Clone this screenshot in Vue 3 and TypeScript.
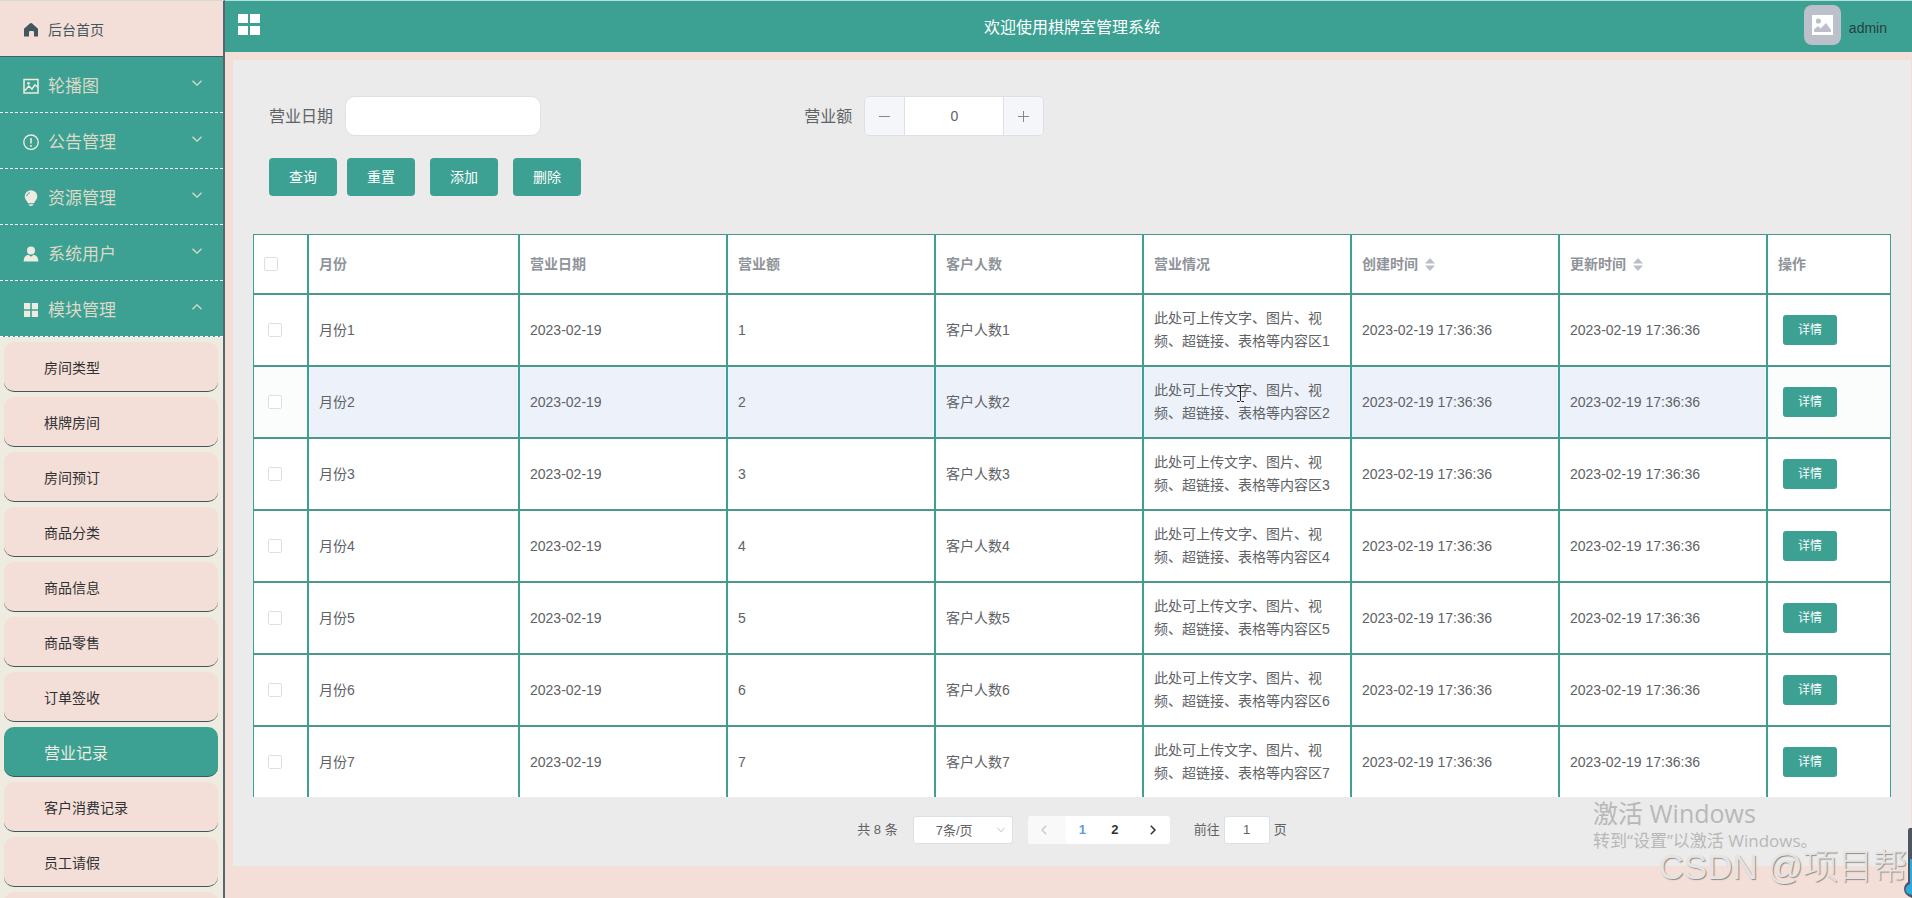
<script setup lang="ts">
import { ref } from 'vue'

interface MenuGroup {
  label: string
  icon: 'picture' | 'warning' | 'bulb' | 'user' | 'grid'
  open: boolean
}

interface BusinessRecord {
  id: number
  month: string
  date: string
  amount: number
  guests: string
  detail: string
  created: string
  updated: string
}

const groups: MenuGroup[] = [
  { label: '轮播图', icon: 'picture', open: false },
  { label: '公告管理', icon: 'warning', open: false },
  { label: '资源管理', icon: 'bulb', open: false },
  { label: '系统用户', icon: 'user', open: false },
  { label: '模块管理', icon: 'grid', open: true },
]

const modules: string[] = [
  '房间类型', '棋牌房间', '房间预订', '商品分类', '商品信息',
  '商品零售', '订单签收', '营业记录', '客户消费记录', '员工请假',
]
const activeModule = ref('营业记录')

const records: BusinessRecord[] = Array.from({ length: 7 }, (_, i) => ({
  id: i + 1,
  month: `月份${i + 1}`,
  date: '2023-02-19',
  amount: i + 1,
  guests: `客户人数${i + 1}`,
  detail: `此处可上传文字、图片、视频、超链接、表格等内容区${i + 1}`,
  created: '2023-02-19 17:36:36',
  updated: '2023-02-19 17:36:36',
}))
const highlighted = ref(2)

const dateQuery = ref('')
const amountQuery = ref(0)
const jumpPage = ref('1')
const currentPage = ref(1)
</script>

<template>
  <div class="layout">
    <nav class="sidebar" aria-label="主导航">
      <a class="home" href="#">
        <svg class="menu-icon" viewBox="0 0 16 16" aria-hidden="true">
          <path d="M8 1 Q8.6 1 9.2 1.6 L15 6.8 V14.6 H11 V10.2 Q11 9 9.8 9 H7.2 Q6 9 6 10.2 V14.6 H1 V6.8 L6.8 1.6 Q7.4 1 8 1Z" fill="currentColor" />
        </svg>
        <span>后台首页</span>
      </a>

      <button v-for="g in groups" :key="g.label" class="group" type="button" :aria-expanded="g.open">
        <svg class="menu-icon" viewBox="0 0 16 16" aria-hidden="true">
          <template v-if="g.icon === 'picture'">
            <path d="M1 1.5H15V15H1Z M2 12.5 L5.8 8 L9 11 L12 6.8 L15 9.5" fill="none" stroke="currentColor" stroke-width="1.5" />
            <circle cx="5.5" cy="5.4" r="1.3" fill="currentColor" />
          </template>
          <template v-else-if="g.icon === 'warning'">
            <circle cx="8" cy="8.2" r="7.2" fill="none" stroke="currentColor" stroke-width="1.4" />
            <path d="M8 4V9.4M8 11V12.8" stroke="currentColor" stroke-width="1.6" />
          </template>
          <template v-else-if="g.icon === 'bulb'">
            <path d="M8 0.2A6.3 6.3 0 0 1 14.3 6.5C14.3 9.4 12 10.7 11 13.2H5C4 10.7 1.7 9.4 1.7 6.5A6.3 6.3 0 0 1 8 .2ZM5.4 14.2H10.6Q10.2 16 8 16T5.4 14.2Z" fill="currentColor" />
            <path d="M3.7 6.2A4.3 4.3 0 0 1 7 2.6" fill="none" stroke="#3ca192" stroke-width="0.9" />
          </template>
          <template v-else-if="g.icon === 'user'">
            <circle cx="8" cy="4.6" r="4" fill="currentColor" />
            <path d="M0.6 15.4Q0.8 9.6 5.4 8.8L8 10.8L10.6 8.8Q15.2 9.6 15.4 15.4Z" fill="currentColor" />
          </template>
          <template v-else>
            <path d="M1 1H7.2V7.2H1ZM8.8 1H15V7.2H8.8ZM1 8.8H7.2V15H1ZM8.8 8.8H15V15H8.8Z" fill="currentColor" />
          </template>
        </svg>
        <span>{{ g.label }}</span>
        <svg class="chevron" viewBox="0 0 10 6" aria-hidden="true">
          <path :d="g.open ? 'M0.5 5.2L5 0.8L9.5 5.2' : 'M0.5 0.8L5 5.2L9.5 0.8'" fill="none" stroke="currentColor" stroke-width="1.3" />
        </svg>
      </button>

      <ul class="modules">
        <li v-for="m in modules" :key="m">
          <a href="#" class="module" :class="{ active: m === activeModule }" @click.prevent="activeModule = m">{{ m }}</a>
        </li>
        <li class="module"></li>
      </ul>
    </nav>

    <div class="page">
      <header class="topbar">
        <button class="toggle" type="button" aria-label="折叠菜单">
          <svg viewBox="0 0 22 21" aria-hidden="true">
            <path d="M0 0H10V9H0ZM12 0H22V9H12ZM0 12H10V21H0ZM12 12H22V21H12Z" fill="#fff" />
          </svg>
        </button>
        <h1>欢迎使用棋牌室管理系统</h1>
        <div class="account">
          <span class="avatar">
            <svg viewBox="0 0 21 20" aria-hidden="true">
              <path d="M0 0H21V20H0Z" fill="#fff" />
              <circle cx="6.4" cy="6" r="2.6" fill="#bcc0ca" />
              <path d="M2 17V14.5L6 11L8.6 13.6L14 8L19 15V17Z" fill="#bcc0ca" />
            </svg>
          </span>
          <span class="username">admin</span>
        </div>
      </header>

      <main class="panel">
        <form class="filters" @submit.prevent>
          <div class="fields">
            <div class="field">
              <label for="biz-date">营业日期</label>
              <input id="biz-date" v-model="dateQuery" class="date-input" type="text" />
            </div>
            <div class="field">
              <label for="biz-amount">营业额</label>
              <div class="stepper">
                <button type="button" aria-label="减少" @click="amountQuery--">
                  <svg viewBox="0 0 11 11" aria-hidden="true"><path d="M0 5.5H11" stroke="currentColor" /></svg>
                </button>
                <input id="biz-amount" v-model="amountQuery" type="text" />
                <button type="button" aria-label="增加" @click="amountQuery++">
                  <svg viewBox="0 0 11 11" aria-hidden="true"><path d="M0 5.5H11M5.5 0V11" stroke="currentColor" /></svg>
                </button>
              </div>
            </div>
          </div>
          <div class="actions">
            <div class="pair">
              <button class="primary" type="submit">查询</button>
              <button class="primary" type="reset">重置</button>
            </div>
            <button class="primary" type="button">添加</button>
            <button class="primary" type="button">删除</button>
          </div>
        </form>

        <table class="records">
          <colgroup>
            <col class="col-check" />
            <col class="col-month" />
            <col span="6" />
            <col class="col-action" />
          </colgroup>
          <thead>
            <tr>
              <th><input type="checkbox" aria-label="全选" /></th>
              <th>月份</th>
              <th>营业日期</th>
              <th>营业额</th>
              <th>客户人数</th>
              <th>营业情况</th>
              <th v-for="name in ['创建时间', '更新时间']" :key="name">
                <span class="sortable">
                  {{ name }}
                  <svg viewBox="0 0 10 13" aria-hidden="true">
                    <path d="M0 5.5L5 0L10 5.5ZM0 7.5H10L5 13Z" fill="#bbbfc9" />
                  </svg>
                </span>
              </th>
              <th>操作</th>
            </tr>
          </thead>
          <tbody>
            <tr v-for="r in records" :key="r.id" :class="{ highlighted: r.id === highlighted }">
              <td class="pick"><input type="checkbox" :aria-label="'选择' + r.month" /></td>
              <td>{{ r.month }}</td>
              <td>{{ r.date }}</td>
              <td>{{ r.amount }}</td>
              <td>{{ r.guests }}</td>
              <td>{{ r.detail }}</td>
              <td>{{ r.created }}</td>
              <td>{{ r.updated }}</td>
              <td class="ops"><button class="primary small" type="button">详情</button></td>
            </tr>
          </tbody>
        </table>

        <div class="pagination">
          <span class="total">共 8 条</span>
          <div class="size">
            <select aria-label="每页条数">
              <option>7条/页</option>
            </select>
            <svg viewBox="0 0 8 6" aria-hidden="true"><path d="M0.5 0.8L4 4.8L7.5 0.8" fill="none" stroke="currentColor" /></svg>
          </div>
          <div class="pager">
            <button class="prev" type="button" disabled aria-label="上一页">
              <svg viewBox="0 0 6 10" aria-hidden="true"><path d="M5.2 0.8L1 5L5.2 9.2" fill="none" stroke="currentColor" stroke-width="1.5" /></svg>
            </button>
            <button v-for="p in 2" :key="p" type="button" :class="{ current: p === currentPage }" @click="currentPage = p">{{ p }}</button>
            <button class="next" type="button" aria-label="下一页">
              <svg viewBox="0 0 6 10" aria-hidden="true"><path d="M0.8 0.8L5 5L0.8 9.2" fill="none" stroke="currentColor" stroke-width="1.5" /></svg>
            </button>
          </div>
          <label class="jump">前往<input v-model="jumpPage" type="text" />页</label>
        </div>
      </main>
    </div>

    <svg class="caret" viewBox="0 0 9 17" aria-hidden="true">
      <path d="M1 .5H3.5L4.5 1.5L5.5 .5H8M4.5 1.5V15.5M1 16.5H3.5L4.5 15.5L5.5 16.5H8" fill="none" stroke="#222" />
    </svg>
    <div class="activation">
      <p class="activation-title">激活 Windows</p>
      <p class="activation-text">转到“设置”以激活 Windows。</p>
    </div>
    <div class="watermark">CSDN @项目帮</div>
    <svg class="gauge" viewBox="0 0 8 70" aria-hidden="true">
      <path d="M8 0H6Q4 0 4 3V54Q0 57 0 61Q0 67 8 70Z" fill="#4c5660" />
      <path d="M8 31H6V56Q1.5 58 1.5 61.5Q2 66 8 67Z" fill="#2fa9e0" />
    </svg>
  </div>
</template>

<style>
body {
  margin: 0;
  overflow: hidden;
}
</style>

<style scoped>
* {
  box-sizing: border-box;
}

.layout {
  --teal: #3ca192;
  --pink: #f4dfd8;
  --slate: #56666c;
  position: relative;
  display: flex;
  height: 100vh;
  overflow: hidden;
  background: var(--pink);
  color: #606266;
  font-family: "Liberation Sans", "Noto Sans CJK SC", sans-serif;
  font-size: 14px;
}

button,
input,
select {
  margin: 0;
  font: inherit;
  color: inherit;
}

button {
  padding: 0;
  border: 0;
  cursor: pointer;
}

a {
  color: inherit;
  text-decoration: none;
}

.sidebar {
  display: flex;
  flex: 0 0 225px;
  flex-direction: column;
  overflow: hidden;
  border-top: 1px solid #dad9d5;
  border-right: 2px solid var(--slate);
  background: #eeebe0;
}

.home,
.group {
  display: flex;
  flex: 0 0 56px;
  align-items: center;
  gap: 9px;
  padding: 0 20px 0 23px;
}

.home {
  border-bottom: 1px solid #43606a;
  background: var(--pink);
  color: #43565d;
}

.group {
  border-bottom: 1px dashed #fff;
  background: var(--teal);
  color: #ddd9c8;
  font-size: 17px;
  text-align: left;
}

.menu-icon {
  width: 16px;
  height: 16px;
  margin-top: 2px;
}

.group .menu-icon {
  color: #eeebe0;
}

.chevron {
  width: 10px;
  height: 6px;
  margin: 0 1px 3px auto;
}

.modules {
  margin: 0;
  padding: 5px 5px 0 4px;
  list-style: none;
}

.module {
  display: flex;
  align-items: center;
  height: 50px;
  margin-bottom: 5px;
  padding-left: 40px;
  border-bottom: 1px solid #43555c;
  border-radius: 10px;
  background: var(--pink);
  color: #303133;
}

.module.active {
  background: var(--teal);
  color: #eeebe0;
  font-size: 16px;
}

.page {
  flex: 1;
  min-width: 0;
}

.topbar {
  display: grid;
  grid-template-columns: 1fr auto 1fr;
  align-items: center;
  height: 52px;
  padding: 0 6px 0 13px;
  border-top: 1px solid #b5e2da;
  background: var(--teal);
}

.toggle {
  width: 22px;
  height: 21px;
  margin-bottom: 4px;
  background: none;
}

.toggle svg {
  display: block;
}

.topbar h1 {
  margin: 0;
  padding-bottom: 2px;
  color: #fff;
  font-size: 16px;
  font-weight: 400;
}

.account {
  display: flex;
  align-items: center;
  justify-content: flex-end;
  gap: 8px;
  padding-right: 19px;
  color: #263f41;
}

.username {
  padding-top: 2px;
}

.avatar {
  display: grid;
  place-items: center;
  width: 37px;
  height: 40px;
  margin-bottom: 3px;
  border-radius: 8px;
  background: #bcc0ca;
}

.avatar svg {
  width: 21px;
  height: 20px;
}

.panel {
  margin: 8px 1px 0 8px;
  padding: 36px 20px 22px;
  background: #ebebeb;
}

.filters {
  padding: 0 16px;
}

.fields {
  display: grid;
  grid-template-columns: repeat(3, 1fr);
}

.field {
  display: flex;
  align-items: center;
  gap: 12px;
  font-size: 16px;
}

.field label {
  padding-bottom: 2px;
}

.date-input {
  width: 196px;
  height: 40px;
  padding: 0 12px;
  border: 1px solid #e0e0e2;
  border-radius: 10px;
  background: #fff;
}

.stepper {
  display: flex;
  width: 180px;
  height: 40px;
  overflow: hidden;
  border: 1px solid #dcdfe6;
  border-radius: 5px;
  font-size: 14px;
}

.stepper button {
  display: grid;
  flex: 0 0 39px;
  place-items: center;
  background: #f4f6fa;
  color: #85888e;
}

.stepper svg {
  width: 11px;
  height: 11px;
}

.stepper input {
  flex: 1;
  min-width: 0;
  padding: 0;
  border: solid #dcdfe6;
  border-width: 0 1px;
  background: #fff;
  text-align: center;
}

.actions {
  display: flex;
  gap: 15px;
  margin: 22px 0 38px;
}

.pair {
  display: flex;
  gap: 10px;
}

.primary {
  width: 68px;
  height: 38px;
  padding-bottom: 2px;
  border-radius: 4px;
  background: var(--teal);
  color: #fff;
}

.primary.small {
  width: 54px;
  height: 30px;
  padding-bottom: 0;
  border-radius: 3px;
  font-size: 12px;
}

.records {
  width: 100%;
  border-spacing: 0;
  table-layout: fixed;
}

.col-check {
  width: 55px;
}

.col-month {
  width: 211px;
}

.col-action {
  width: 124px;
}

.records th,
.records td {
  height: 72px;
  padding: 0 10px;
  border: 1px solid;
  border-color: #4c978c var(--teal);
  background: #fff;
  line-height: 23px;
  text-align: left;
}

.records th {
  height: 60px;
  color: #909399;
  font-weight: 700;
}

.records tbody tr:last-child td {
  height: 71px;
  border-bottom: 0;
}

.records .highlighted td {
  background: #edf2fa;
}

.records .highlighted .pick,
.records .highlighted .ops {
  background: #fbfdfc;
}

.records input {
  display: block;
  width: 14px;
  height: 14px;
  border: 1px solid #dcdfe6;
  border-radius: 2px;
  background: #fff;
  appearance: none;
}

.records .pick {
  padding-left: 14px;
}

.records .ops {
  padding-left: 15px;
}

.ops button {
  display: block;
}

.sortable {
  display: flex;
  align-items: center;
  gap: 7px;
}

.sortable svg {
  width: 10px;
  height: 13px;
}

.pagination {
  display: flex;
  justify-content: center;
  height: 28px;
  margin-top: 19px;
  font-size: 13px;
  line-height: 28px;
}

.total {
  margin-right: 15px;
}

.size {
  position: relative;
  width: 100px;
  margin-right: 15px;
}

.size select {
  width: 100%;
  height: 28px;
  padding: 0 22px 2px;
  border: 1px solid #dcdfe6;
  border-radius: 3px;
  background: #fff;
  appearance: none;
}

.size svg {
  position: absolute;
  top: 11px;
  right: 8px;
  width: 8px;
  height: 6px;
  color: #c0c4cc;
}

.pager {
  display: flex;
  width: 142px;
  margin-right: 24px;
  overflow: hidden;
  border-radius: 3px;
}

.pager button {
  display: grid;
  flex: 1 1 0;
  place-items: center;
  background: #fff;
  color: #303133;
  font-weight: 700;
}

.pager button:disabled {
  background: #f9f9f9;
  color: #c8cbd1;
}

.pager .prev {
  padding-right: 6px;
}

.pager .next {
  padding-left: 6px;
}

.pager .current {
  color: #5b9ce0;
}

.pager svg {
  width: 6px;
  height: 10px;
}

.jump {
  display: flex;
  gap: 4px;
}

.jump input {
  width: 46px;
  height: 28px;
  padding: 0;
  border: 1px solid #dcdfe6;
  border-radius: 3px;
  background: #fff;
  text-align: center;
}

.caret {
  position: absolute;
  top: 385px;
  left: 1236px;
  width: 9px;
  height: 17px;
}

.activation {
  position: absolute;
  right: 85px;
  bottom: 44px;
  width: 234px;
  color: #b8b8b8;
  font-family: "Open Sans", "Noto Sans CJK SC", sans-serif;
  white-space: nowrap;
}

.activation p {
  margin: 0;
}

.activation-title {
  font-size: 25px;
  line-height: 30px;
}

.activation-text {
  font-size: 17px;
  line-height: 26px;
}

.watermark {
  position: absolute;
  right: 4px;
  bottom: 8px;
  color: #e6e3e2;
  font-family: "Liberation Sans", "Noto Sans CJK SC", sans-serif;
  font-size: 35px;
  font-weight: 300;
  line-height: 46px;
  text-shadow: 1px 1px 1px #8f8b8a;
  white-space: nowrap;
}

.gauge {
  position: absolute;
  right: 0;
  bottom: 0;
  width: 8px;
  height: 70px;
}
</style>
